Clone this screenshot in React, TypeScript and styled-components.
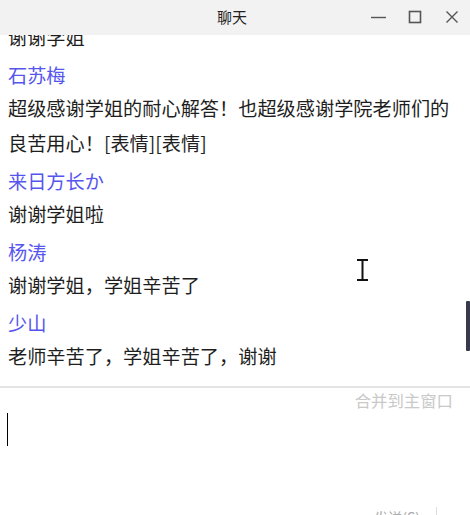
import React, { useLayoutEffect, useRef } from 'react'
import styled, { createGlobalStyle } from 'styled-components'

type Msg = {
  name: string
  text: string
}

const messages: Msg[] = [
  { name: '小雨', text: '学姐讲得太清楚了' },
  { name: '陈晨', text: '谢谢学姐' },
  { name: '石苏梅', text: '超级感谢学姐的耐心解答！也超级感谢学院老师们的良苦用心！[表情][表情]' },
  { name: '来日方长か', text: '谢谢学姐啦' },
  { name: '杨涛', text: '谢谢学姐，学姐辛苦了' },
  { name: '少山', text: '老师辛苦了，学姐辛苦了，谢谢' }
]

const App = () => {
  const paneRef = useRef<HTMLDivElement>(null)

  // chat view stays pinned to the newest message
  useLayoutEffect(() => {
    const pane = paneRef.current
    if (pane) pane.scrollTop = pane.scrollHeight - pane.clientHeight
  }, [])

  return (
    <>
      <GlobalStyle />
      <Window>
        <TitleBar>
          <span />
          <Title>聊天</Title>
          <Controls>
            <ControlButton aria-label="最小化">
              <svg width="16" height="16" viewBox="0 0 16 16">
                <path d="M1 8.5h15" stroke="#555" strokeWidth="1.4" />
              </svg>
            </ControlButton>
            <ControlButton aria-label="最大化">
              <svg width="14" height="14" viewBox="0 0 14 14">
                <rect x="1.5" y="1.5" width="11" height="11" fill="none" stroke="#555" strokeWidth="1.6" />
              </svg>
            </ControlButton>
            <ControlButton aria-label="关闭">
              <svg width="14" height="14" viewBox="0 0 14 14">
                <path d="M1.5 1.5l11 11M12.5 1.5l-11 11" stroke="#555" strokeWidth="1.4" />
              </svg>
            </ControlButton>
          </Controls>
        </TitleBar>

        <ChatWrap>
          <ChatPane ref={paneRef}>
            <MessageList>
              {messages.map((m, i) => (
                <Block key={i}>
                  <Sender>{m.name}</Sender>
                  <Text>{m.text}</Text>
                </Block>
              ))}
            </MessageList>
          </ChatPane>
          <ScrollThumb />
          <MouseCursor width="11" height="22" viewBox="0 0 11 22">
            <path d="M0 1h11M0 21h11M5.5 1v20" stroke="#111" strokeWidth="2" fill="none" />
          </MouseCursor>
        </ChatWrap>

        <InputArea>
          <MergeRow>
            <MergeLink>合并到主窗口</MergeLink>
          </MergeRow>
          <Caret />
        </InputArea>

        <Footer>
          <SendButton>发送(S)</SendButton>
          <Divider />
        </Footer>
      </Window>
    </>
  )
}

export default App

const GlobalStyle = createGlobalStyle`
  html, body {
    margin: 0;
    padding: 0;
    overflow: hidden;
    background: #fff;
  }
  body {
    font-family: "Noto Sans CJK SC", "Noto Sans", sans-serif;
    color: #222;
  }
`

const Window = styled.div`
  width: 470px;
  height: 515px;
  display: flex;
  flex-direction: column;
  overflow: hidden;
  background: #fff;
`

const TitleBar = styled.div`
  flex: 0 0 35px;
  display: grid;
  grid-template-columns: 1fr auto 1fr;
  align-items: center;
  background: #f2f2f2;
  position: relative;
  z-index: 1;
`

const Title = styled.div`
  font-size: 15px;
  line-height: 20px;
  color: #222;
  margin-left: -6px;
  margin-top: -2px;
`

const Controls = styled.div`
  display: flex;
  justify-content: flex-end;
  align-items: center;
  height: 100%;
`

const ControlButton = styled.button`
  width: 37px;
  height: 35px;
  border: 0;
  padding: 0;
  margin-top: -2px;
  background: transparent;
  display: flex;
  align-items: center;
  justify-content: center;
`

const ChatWrap = styled.div`
  flex: 0 0 351px;
  position: relative;
  overflow: hidden;
`

const ChatPane = styled.div`
  height: 100%;
  overflow-y: auto;
  scrollbar-width: none;

  &::-webkit-scrollbar {
    display: none;
  }
`

const MessageList = styled.div`
  padding: 0 8px 8px;
`

const Block = styled.div`
  margin-bottom: 4px;
`

const Sender = styled.div`
  font-size: 19.2px;
  line-height: 32px;
  color: #5656ee;
`

const Text = styled.div`
  font-size: 19.2px;
  line-height: 35px;
  color: #1e1e1e;
`

const ScrollThumb = styled.div`
  position: absolute;
  right: 0;
  top: 266px;
  width: 4px;
  height: 50px;
  border-radius: 1px;
  background: #363a4c;
`

const MouseCursor = styled.svg`
  position: absolute;
  left: 357px;
  top: 224px;
`

const InputArea = styled.div`
  flex: 1;
  border-top: 2px solid #e4e4e4;
  padding: 2px 17px 0 7px;
`

const MergeRow = styled.div`
  display: flex;
  justify-content: flex-end;
`

const MergeLink = styled.span`
  font-size: 16.4px;
  line-height: 20px;
  color: #c9c9c9;
`

const Caret = styled.div`
  width: 1px;
  height: 33px;
  margin-top: 3px;
  background: #000;
`

const Footer = styled.div`
  flex: 0 0 8px;
  display: flex;
  justify-content: flex-end;
  align-items: flex-start;
  padding-right: 33px;
  overflow: hidden;
`

const SendButton = styled.div`
  font-size: 14px;
  line-height: 14px;
  margin-top: 3px;
  color: #aaa;
  margin-right: 16px;
`

const Divider = styled.div`
  width: 1px;
  height: 8px;
  background: #ddd;
`
